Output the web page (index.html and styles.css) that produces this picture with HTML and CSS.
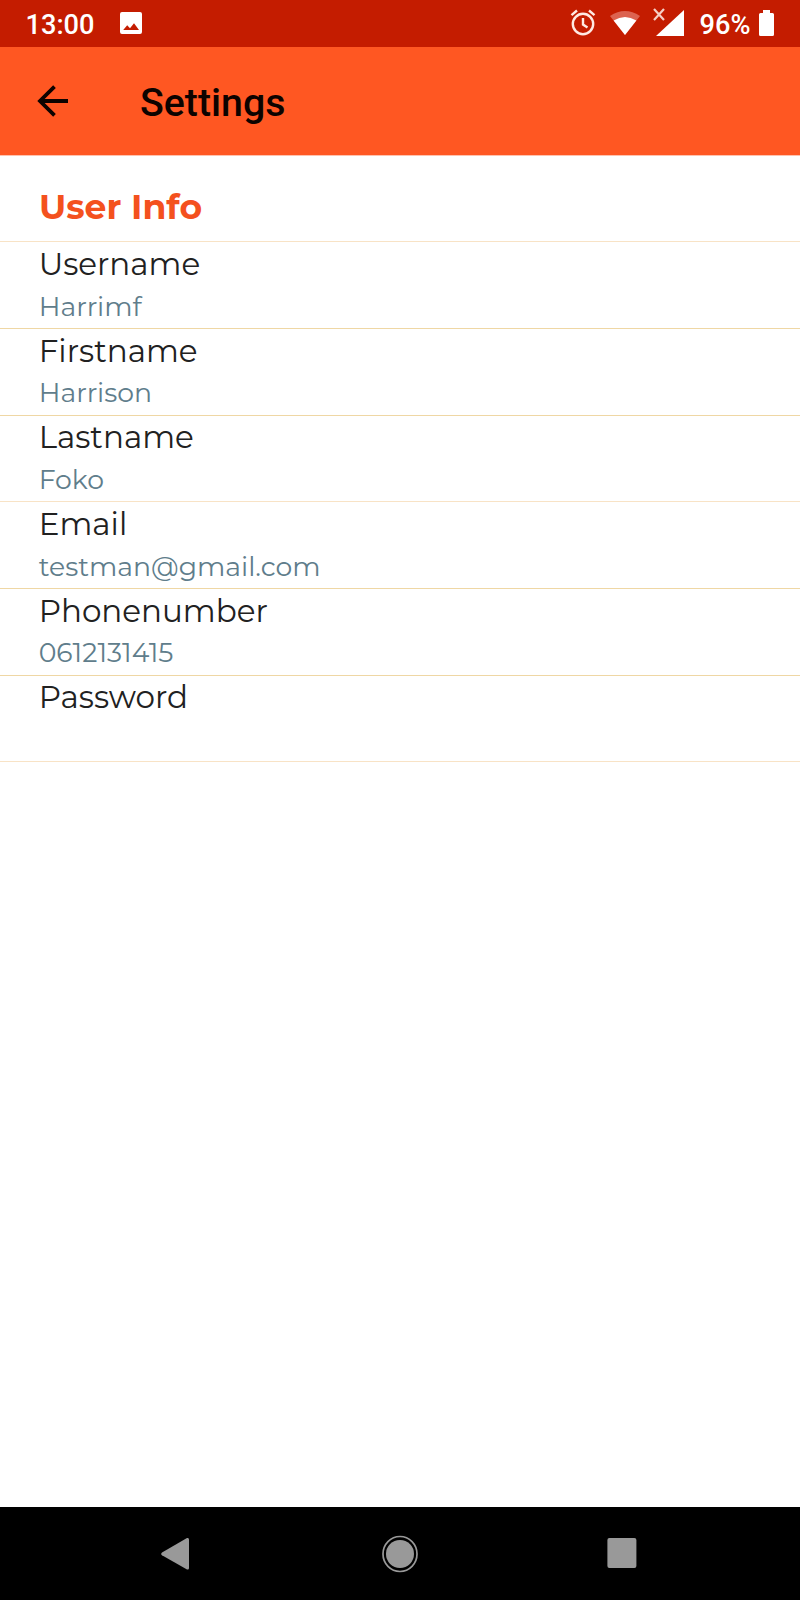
FILE: index.html
```html
<!DOCTYPE html>
<html lang="en">
<head>
<meta charset="utf-8">
<title>Settings</title>
<link rel="stylesheet" href="styles.css">
</head>
<body>
<div class="screen">
  <header class="status-bar">
    <span class="clock">13:00</span>
    <svg class="picture-icon" width="22" height="22" viewBox="0 0 22 22"><path fill="#fff" fill-rule="evenodd" d="M2 0H20Q22 0 22 2V20Q22 22 20 22H2Q0 22 0 20V2Q0 0 2 0ZM3.2 18H19L14 11.2L10 16.2L7.2 13.2Z"/></svg>
    <span class="spacer"></span>
    <svg class="alarm-icon" width="26" height="27" viewBox="0 0 26 27" fill="none" stroke="#ffe9e2" stroke-width="2.4"><circle cx="13" cy="15" r="10.2"/><path d="M13 9V15.6L17.5 18.4M1.5 6.2L7 1.5M24.5 6.2L19 1.5"/></svg>
    <svg class="wifi-icon" width="30" height="24" viewBox="0 0 30 24"><path fill="#dc6350" d="M0 5Q15 -5 30 5L15 24Z"/><path fill="#fff" d="M3.6 9.5Q15 2.5 26.4 9.5L15 24Z"/></svg>
    <svg class="signal-icon" width="32" height="28" viewBox="0 0 32 28"><path fill="#fff" d="M31 2V28H3Z"/><path stroke="#f6cfc5" stroke-width="2.2" d="M1 1L11 12M11 1L1 12"/></svg>
    <span class="percent">96%</span>
    <svg class="battery-icon" width="15" height="26" viewBox="0 0 15 26"><path fill="#fff" d="M4 0H11V3H13.5Q15 3 15 4.5V24.5Q15 26 13.5 26H1.5Q0 26 0 24.5V4.5Q0 3 1.5 3H4Z"/></svg>
  </header>
  <div class="app-bar">
    <svg class="back-icon" width="32" height="32" viewBox="0 0 32 32" fill="none" stroke="#0d0300" stroke-width="3.8"><path d="M31 16H3M17.5 1.6L3 16L17.5 30.4"/></svg>
    <h1 class="title">Settings</h1>
  </div>
  <main class="content">
    <h2 class="section">User Info</h2>
    <div class="row soft"><div class="label">Username</div><div class="value">Harrimf</div></div>
    <div class="row"><div class="label">Firstname</div><div class="value">Harrison</div></div>
    <div class="row"><div class="label">Lastname</div><div class="value">Foko</div></div>
    <div class="row soft"><div class="label">Email</div><div class="value">testman@gmail.com</div></div>
    <div class="row"><div class="label">Phonenumber</div><div class="value">0612131415</div></div>
    <div class="row"><div class="label">Password</div></div>
    <div class="end-line"></div>
  </main>
  <nav class="nav-bar">
    <svg width="28" height="34" viewBox="0 0 28 34"><path fill="#999" d="M26 1.1Q28 .5 28 2.5V31Q28 33 26 32.4L1 18.2Q-.6 17 1 15.6Z"/></svg>
    <svg class="home-icon" width="36" height="38" viewBox="0 0 36 38"><ellipse cx="18" cy="19" rx="17" ry="17.5" fill="none" stroke="#999" stroke-width="1.7"/><circle cx="18" cy="19" r="14" fill="#999"/></svg>
    <svg width="30" height="31" viewBox="0 0 30 31"><rect x=".4" width="29" height="30" rx="2" fill="#999"/></svg>
  </nav>
</div>
</body>
</html>
```
FILE: styles.css
```css
body { margin: 0; background: #fff; }
h1, h2 { margin: 0; }
.screen { width: 800px; height: 1600px; display: flex; flex-direction: column; overflow: hidden; }
.status-bar { height: 47px; box-sizing: border-box; display: flex; align-items: flex-start; background: #c41c00; color: #fff; padding: 0 26px 0 25.5px; font: 500 27.2px/30px Roboto, sans-serif; }
.clock, .percent { margin-top: 10px; }
.clock { width: 94.5px; }
.picture-icon { margin-top: 12px; }
.spacer { flex: 1; }
.alarm-icon { margin: 9px 14px 0 0; }
.wifi-icon { margin: 10.5px 13px 0 0; }
.signal-icon { margin: 8px 14.5px 0 0; }
.percent { width: 51.5px; margin-right: 8px; }
.battery-icon { margin-top: 10px; }
.app-bar { height: 108px; display: flex; align-items: flex-start; background: #ff5722; border-bottom: 1px solid #ffc2ae; }
.back-icon { margin: 37.5px 71.5px 0 36.5px; }
.title { margin-top: 33px; color: #0d0300; font: 500 39.3px/46px Roboto, sans-serif; }
.content { flex: 1; font-family: Montserrat, Inter, sans-serif; }
.section { height: 85.3px; box-sizing: border-box; padding: 31px 0 0 39px; color: #f4511e; font-size: 34.6px; line-height: 40px; font-weight: 700; }
.row { height: 86.68px; box-sizing: border-box; border-top: 1px solid #efd7a4; padding: 1.8px 0 0 38.7px; }
.soft { border-top-color: #f8e3c6; }
.label, .value { white-space: nowrap; font-weight: 400; }
.label { color: #212121; font-size: 31px; line-height: 40px; }
.value { color: #607d8b; font-size: 26.7px; line-height: 40px; padding-top: 2.5px; }
.end-line { border-top: 1px solid #f8e3c6; }
.nav-bar { height: 93px; display: flex; align-items: center; justify-content: space-between; background: #000; box-sizing: border-box; padding: 0 163px 0 161px; }
.home-icon { margin-left: 4px; }
```
